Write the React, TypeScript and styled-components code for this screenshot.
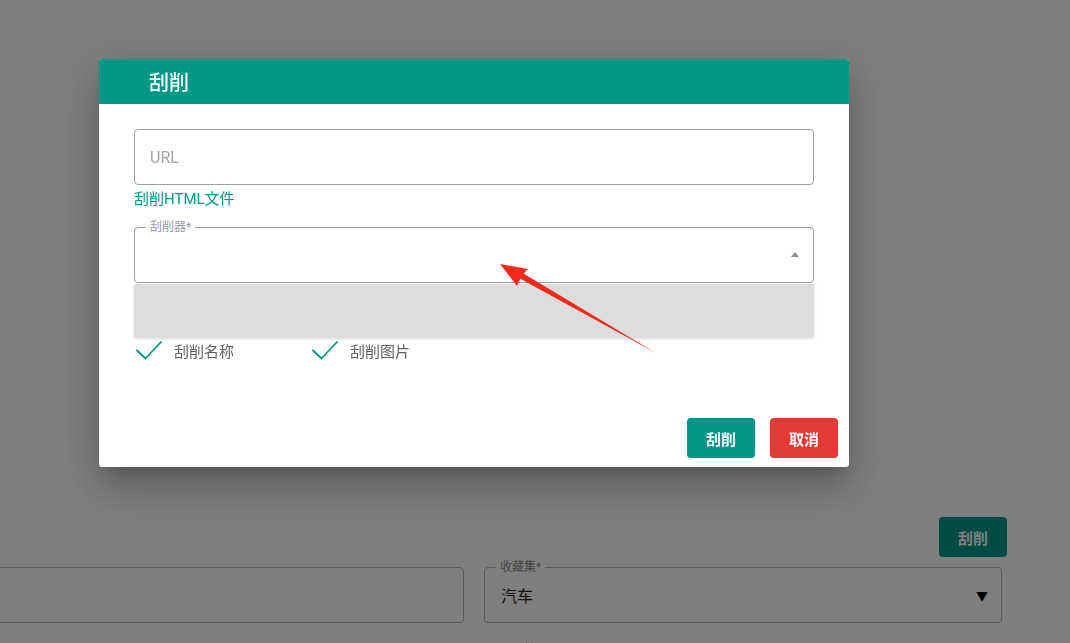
import styled, { createGlobalStyle } from 'styled-components';

const GlobalStyle = createGlobalStyle`
  html, body {
    margin: 0;
    padding: 0;
    background: #ffffff;
    font-family: Roboto, "Noto Sans CJK SC", sans-serif;
    overflow: hidden;
  }
  * {
    box-sizing: border-box;
  }
`

const CheckIcon = () => (
  <svg width="26" height="20" viewBox="0 0 26 20" fill="none">
    <path d="M1 10.5 L9.5 18.5 L25 2" stroke="#009688" strokeWidth="1.8" strokeLinecap="round" strokeLinejoin="round" />
  </svg>
)

const App = () => {
  return (
    <>
      <GlobalStyle />
      <Page>
        <Toolbar>
          <Button $color="#009688">刮削</Button>
        </Toolbar>
        <FormRow>
          <OutlinedBox $height={56} />
          <OutlinedBox $height={56}>
            <FloatLabel $dark>收藏集*</FloatLabel>
            <SelectValue>汽车</SelectValue>
            <DownArrow>▼</DownArrow>
          </OutlinedBox>
        </FormRow>
        <FormRow>
          <div />
          <NextLabel>可见性*</NextLabel>
        </FormRow>
      </Page>

      <Overlay>
        <Dialog>
          <DialogHeader>刮削</DialogHeader>
          <DialogBody>
            <TextInput>URL</TextInput>
            <TextLink>刮削HTML文件</TextLink>
            <SelectField>
              <FloatLabel>刮削器*</FloatLabel>
              <UpArrow />
              <Menu />
            </SelectField>
            <CheckRow>
              <CheckItem>
                <CheckIcon />
                <span>刮削名称</span>
              </CheckItem>
              <CheckItem>
                <CheckIcon />
                <span>刮削图片</span>
              </CheckItem>
            </CheckRow>
          </DialogBody>
          <DialogFooter>
            <Button $color="#009688">刮削</Button>
            <Button $color="#e53935">取消</Button>
          </DialogFooter>
        </Dialog>
        <Annotation width="1070" height="643" viewBox="0 0 1070 643">
          <polygon
            points="500,264 528,269 523.5,273.6 656,353 520.3,278.8 517,286"
            fill="#f4291c"
          />
        </Annotation>
      </Overlay>
    </>
  )
}

const Page = styled.div`
  width: 1070px;
  height: 643px;
  padding: 517px 63px 0 0;
  display: flex;
  flex-direction: column;
  gap: 10px;
`

const Toolbar = styled.div`
  display: flex;
  justify-content: flex-end;
`

const FormRow = styled.div`
  display: grid;
  grid-template-columns: 484px 518px;
  gap: 20px;
  margin-left: -20px;
`

const OutlinedBox = styled.div<{ $height: number }>`
  position: relative;
  height: ${(p) => p.$height}px;
  border: 1px solid #b5b5b5;
  border-radius: 4px;
  display: flex;
  align-items: center;
  padding: 0 16px;
`

const SelectValue = styled.span`
  font-size: 16px;
  color: #222;
  flex: 1;
`

const DownArrow = styled.span`
  font-size: 12px;
  color: #000;
  margin-right: -3px;
`

const NextLabel = styled.span`
  font-size: 12px;
  color: #999;
  padding-left: 16px;
  margin-top: 6px;
`

const Overlay = styled.div`
  position: fixed;
  inset: 0;
  background: rgba(0, 0, 0, 0.5);
  padding: 59px 0 0 99px;
`

const Dialog = styled.div`
  width: 750px;
  height: 408px;
  background: #ffffff;
  border-radius: 3px;
  overflow: hidden;
  display: flex;
  flex-direction: column;
  box-shadow: 0 11px 15px -7px rgba(0, 0, 0, 0.2), 0 24px 38px 3px rgba(0, 0, 0, 0.14),
    0 9px 46px 8px rgba(0, 0, 0, 0.12);
`

const DialogHeader = styled.div`
  height: 45px;
  flex: none;
  background: #009688;
  color: #ffffff;
  font-size: 20px;
  font-weight: 500;
  display: flex;
  align-items: center;
  padding-left: 50px;
`

const DialogBody = styled.div`
  height: 314px;
  flex: none;
  padding: 25px 35px 0;
  display: flex;
  flex-direction: column;
`

const TextInput = styled.div`
  height: 56px;
  border: 1px solid #9e9e9e;
  border-radius: 4px;
  display: flex;
  align-items: center;
  padding: 0 15px;
  color: #a4a4a4;
  font-size: 16px;
`

const TextLink = styled.span`
  color: #009688;
  font-size: 15px;
  line-height: 20px;
  margin-top: 4px;
`

const SelectField = styled.div`
  position: relative;
  height: 56px;
  margin-top: 18px;
  border: 1px solid #9e9e9e;
  border-radius: 4px;
`

const FloatLabel = styled.span<{ $dark?: boolean }>`
  position: absolute;
  top: -9px;
  left: 11px;
  padding: 0 4px;
  font-size: 12px;
  line-height: 16px;
  color: ${(p) => (p.$dark ? '#8a8a8a' : '#9a9a9a')};
  background: #ffffff;
`

const UpArrow = styled.span`
  position: absolute;
  right: 14px;
  top: 24px;
  width: 0;
  height: 0;
  border-left: 4px solid transparent;
  border-right: 4px solid transparent;
  border-bottom: 5px solid #8c8c8c;
`

const Menu = styled.div`
  position: absolute;
  left: -1px;
  right: -1px;
  top: 56px;
  height: 53px;
  background: #dddddd;
  border-radius: 0 0 4px 4px;
  box-shadow: 0 2px 3px rgba(0, 0, 0, 0.15);
  z-index: 1;
`

const CheckRow = styled.div`
  display: flex;
  margin-top: 56px;
  padding-left: 2px;
`

const CheckItem = styled.div`
  width: 176px;
  display: flex;
  align-items: center;
  gap: 12px;
  font-size: 15px;
  color: #5f5f5f;
  height: 22px;
`

const DialogFooter = styled.div`
  display: flex;
  justify-content: flex-end;
  gap: 15px;
  padding: 0 11px 9px;
`

const Button = styled.button<{ $color: string }>`
  width: 68px;
  height: 40px;
  border: none;
  border-radius: 4px;
  background: ${(p) => p.$color};
  color: #ffffff;
  font-family: Roboto, "Noto Sans CJK SC", sans-serif;
  font-size: 15px;
  font-weight: 700;
  cursor: pointer;
`

const Annotation = styled.svg`
  position: absolute;
  left: 0;
  top: 0;
  z-index: 5;
  pointer-events: none;
`

export default App
